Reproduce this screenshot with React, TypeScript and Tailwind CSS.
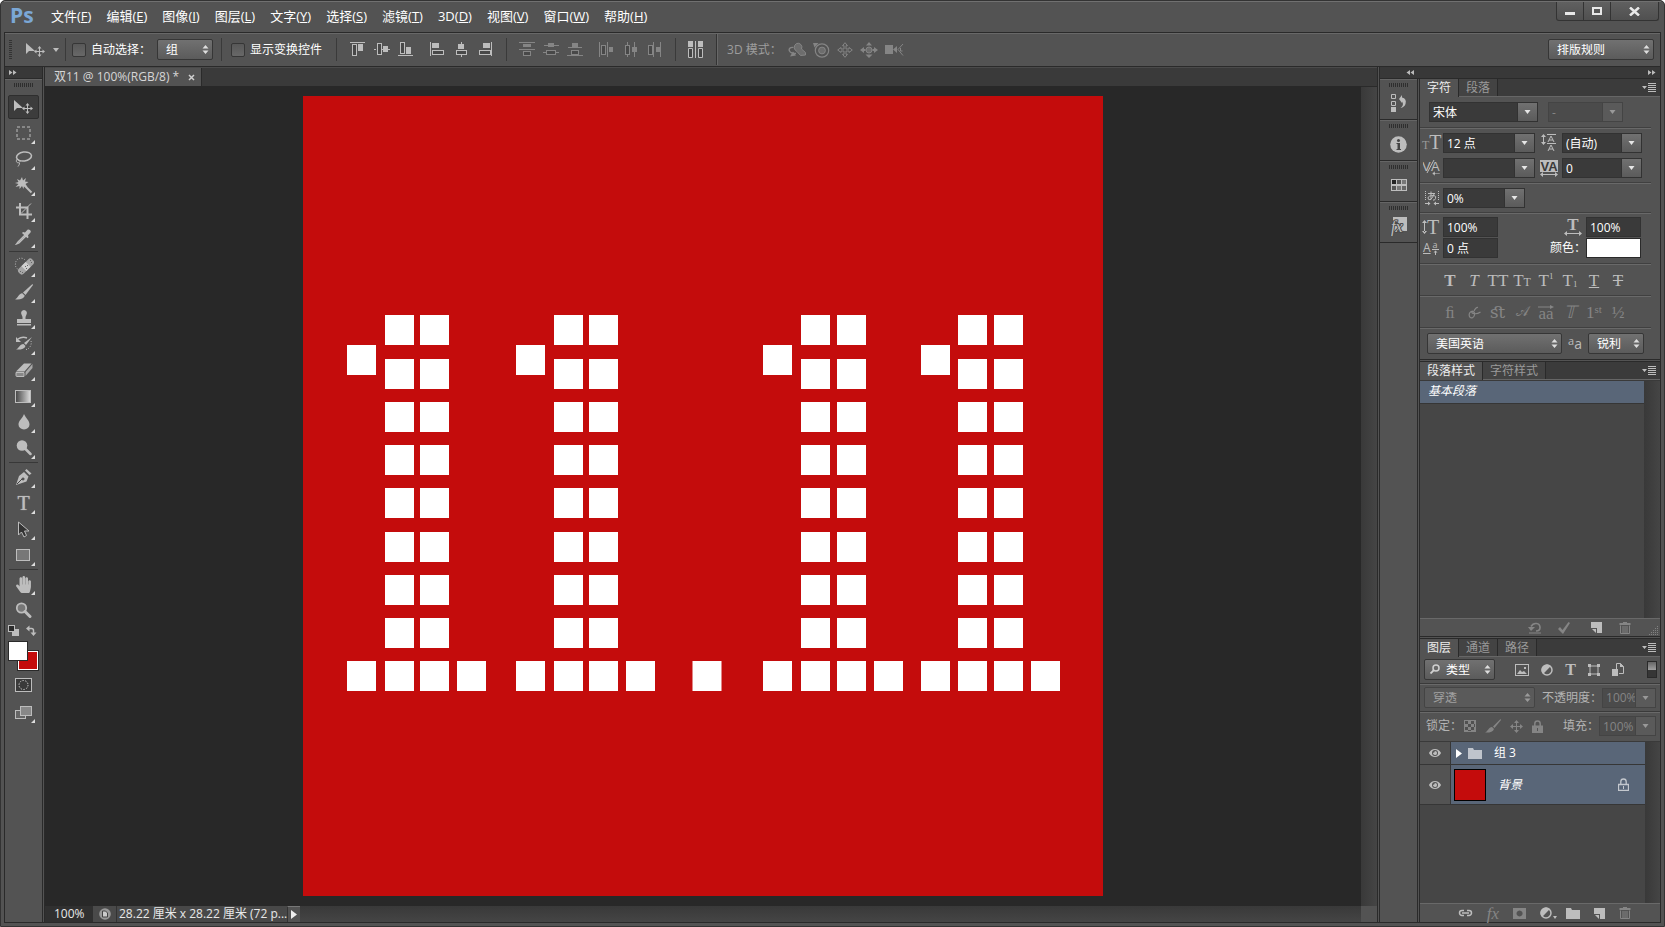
import { clsx } from "clsx"
import { Fragment, type ReactNode } from "react"
import { FaEye, FaHandPaper } from "react-icons/fa"

const MENUS = [
  ["文件", "F"],
  ["编辑", "E"],
  ["图像", "I"],
  ["图层", "L"],
  ["文字", "Y"],
  ["选择", "S"],
  ["滤镜", "T"],
  ["3D", "D"],
  ["视图", "V"],
  ["窗口", "W"],
  ["帮助", "H"],
]

function Svg({ w, h, children, className }: { w: number; h: number; children: ReactNode; className?: string }) {
  return (
    <svg width={w} height={h} viewBox={`0 0 ${w} ${h}`} fill="currentColor" aria-hidden="true" className={clsx("shrink-0", className)}>
      {children}
    </svg>
  )
}

/* ---------- shared controls ---------- */

function Select({ label, options, className, pad = "pl-2", disabled }: {
  label: string
  options: string[]
  className: string
  pad?: string
  disabled?: boolean
}) {
  return (
    <span className={clsx("relative inline-flex h-[21px] shrink-0", className)}>
      <select
        aria-label={label}
        disabled={disabled}
        className={clsx(
          "h-full w-full appearance-none rounded-[2px] border text-[12px] leading-none",
          pad,
          disabled
            ? "border-[#444] bg-[#5a5a5a] text-[#a0a0a0]"
            : "border-[#363636] bg-linear-to-b from-[#717171] to-[#5b5b5b] text-white",
        )}
      >
        {options.map((o) => <option key={o}>{o}</option>)}
      </select>
      <Svg w={7} h={9} className={clsx("pointer-events-none absolute top-[6px] right-1", disabled ? "text-[#9a9a9a]" : "text-[#dedede]")}>
        <path d="M3.5 0 6.5 3.5h-6zM3.5 9 .5 5.5h6z" />
      </Svg>
    </span>
  )
}

function Combo({ label, value, disabled, className }: { label: string; value: string; disabled?: boolean; className?: string }) {
  return (
    <span className={clsx("flex h-5 border", disabled ? "border-[#444]" : "border-[#323232]", className)}>
      <input
        aria-label={label}
        defaultValue={value}
        disabled={disabled}
        className={clsx("w-0 min-w-0 flex-1 pl-[3px] text-[12px] leading-none", disabled ? "bg-[#4b4b4b] text-[#858585]" : "bg-[#3a3a3a] text-white")}
      />
      <button
        type="button"
        aria-label={`${label} 选项`}
        disabled={disabled}
        className={clsx(
          "flex w-5 items-center justify-center border-l",
          disabled ? "border-[#444] bg-[#5a5a5a] text-[#999]" : "border-[#323232] bg-linear-to-b from-[#717171] to-[#5b5b5b] text-[#e6e6e6]",
        )}
      >
        <Svg w={7} h={4}><path d="M.5 0h6l-3 4z" /></Svg>
      </button>
    </span>
  )
}

function Field({ label, value }: { label: string; value: string }) {
  return (
    <input
      aria-label={label}
      defaultValue={value}
      className="h-5 w-full min-w-0 border border-[#323232] bg-[#3a3a3a] px-[3px] text-[12px] leading-none text-white"
    />
  )
}

function IconButton({ label, children, className, disabled }: { label: string; children: ReactNode; className?: string; disabled?: boolean }) {
  return (
    <button type="button" title={label} aria-label={label} disabled={disabled}
      className={clsx("flex shrink-0 items-center justify-center", disabled ? "text-[#858585]" : "text-[#bdbdbd]", className)}>
      {children}
    </button>
  )
}

function Grip() {
  return (
    <Svg w={20} h={4} className="text-[#2e2e2e]">
      {Array.from({ length: 10 }, (_, i) => <rect key={i} x={i * 2} y={0} width={1} height={4} />)}
    </Svg>
  )
}

function Rule() {
  return <hr className="mr-[9px] h-[2px] border-t border-b border-t-[#404040] border-b-[#696969]" />
}

function Separator() {
  return <span className="h-[23px] w-px shrink-0 bg-[#3a3a3a]" />
}

function PanelTabs({ tabs }: { tabs: string[] }) {
  return (
    <div className="flex h-[18px] shrink-0 border-b border-[#666] bg-[#3b3b3b]" role="tablist">
      {tabs.map((t, i) => (
        <button
          key={t}
          type="button"
          role="tab"
          aria-selected={i === 0}
          className={clsx(
            "border-r border-[#2a2a2a] px-[7px] text-[12px] leading-none",
            i === 0 ? "-mb-px bg-[#535353] text-[#ececec]" : "bg-[#434343] text-[#9a9a9a]",
          )}
        >
          {t}
        </button>
      ))}
      <IconButton label="面板菜单" className="mr-1 ml-auto">
        <Svg w={14} h={9}>
          <path d="M0 3h5L2.500 6zM6 0h8v1H6zM6 2h8v1H6zM6 4h8v1H6zM6 6h8v1H6zM6 8h8v1H6z" />
        </Svg>
      </IconButton>
    </div>
  )
}

/* ---------- shapes used in more than one place ---------- */

const MoveGlyph = () => (
  <Svg w={19} h={14}>
    <path d="M0 0v11l3-3h6z" />
    <path d="M13.500 4v9M9 8.500h9" stroke="currentColor" />
    <path d="M13.500 3l2 2.500h-4zM13.500 14l2-2.500h-4zM8 8.500l2.500-2v4zM19 8.500l-2.500-2v4z" />
  </Svg>
)

const BrushGlyph = () => (
  <Svg w={18} h={16}>
    <path d="M17.500 0 18 1 10.500 11 8 8.500z" />
    <path d="M7.300 9.200 9.800 11.700C9 14.500 5 16 0 15.300 3 14 3.500 9.500 7.300 9.200z" />
  </Svg>
)

const NewGlyph = () => (
  <Svg w={11} h={11}>
    <path d="M0 0h11v11H6V6H0z" />
    <path d="M1 7h4v4z" />
  </Svg>
)

const TrashGlyph = () => (
  <Svg w={12} h={12}>
    <path d="M4 0h4v1h3.500v2H.500V1H4z" />
    <path d="M1.500 3.500v8h9v-8M4 4v7M6 4v7M8 4v7" stroke="currentColor" fill="none" />
  </Svg>
)

const AdjustGlyph = () => (
  <Svg w={12} h={12}>
    <circle cx={6} cy={6} r={5} fill="#555" stroke="currentColor" strokeWidth={1.500} />
    <path d="M9.900 2.100A5.500 5.500 0 0 0 2.100 9.900z" />
  </Svg>
)

const LockGlyph = () => (
  <Svg w={11} h={13}>
    <path d="M2.800 6V3.700a2.700 2.700 0 0 1 5.400 0V6" fill="none" stroke="currentColor" strokeWidth={1.500} />
    <path fillRule="evenodd" d="M0 5.500h11V13H0zM5 8v3h1V8z" />
  </Svg>
)

const LockOutlineGlyph = () => (
  <Svg w={11} h={13}>
    <path d="M2.800 6V3.700a2.700 2.700 0 0 1 5.400 0V6M.500 6.500h10v6H.500z" fill="none" stroke="currentColor" strokeWidth={1.300} />
    <path d="M5 8h1v3H5z" />
  </Svg>
)

const FolderGlyph = () => (
  <Svg w={14} h={11}><path d="M0 0h5l1 2h8v9H0z" /></Svg>
)

/* ---------- tools ---------- */

// null is a divider between tool groups
const TOOLS: ({ name: string; icon: ReactNode; plain?: boolean } | null)[] = [
  { name: "移动工具", icon: <MoveGlyph />, plain: true },
  { name: "矩形选框工具", icon: <Svg w={16} h={14}><rect x={1} y={1} width={13} height={12} fill="none" stroke="currentColor" strokeDasharray="3 2" /></Svg> },
  {
    name: "套索工具",
    icon: (
      <Svg w={18} h={16}>
        <g fill="none" stroke="currentColor" strokeWidth={1.500}>
          <ellipse cx={9} cy={5.500} rx={7.500} ry={4.500} transform="rotate(-8 9 5.500)" />
          <path d="M2.500 8C0 10 2 12.500 4 11.500S5 9 3 9.500M4.500 12c0 2-1 2.500-1.500 3.500" strokeWidth={1} />
        </g>
      </Svg>
    ),
  },
  {
    name: "魔棒工具",
    icon: (
      <Svg w={18} h={17}>
        <path d="M7 0l1 3.500L11 1l-1 3.500 3.500.500-3 2 2 3-3.500-1L8.500 12 7 9l-2.500 3V9L.500 10l3-3L0 6l3.500-1L2 2l3 1.500z" />
        <path d="M9.500 8.500l7 7" stroke="currentColor" strokeWidth={2} />
      </Svg>
    ),
  },
  {
    name: "裁剪工具",
    icon: (
      <Svg w={16} h={16}>
        <path d="M4 0v11.500h12M0 4.500h11.500V16" fill="none" stroke="currentColor" strokeWidth={2} />
        <path d="M5 10.500L15 .500" stroke="currentColor" />
      </Svg>
    ),
  },
  {
    name: "吸管工具",
    icon: (
      <Svg w={17} h={16}>
        <path d="M10 6 3 13l-1.500 2L4 14l7-7" fill="#555" stroke="currentColor" strokeWidth={1.300} />
        <path d="M8 3l2 .500L12.500.800C14-.500 16.800 1.800 15.500 3.500L13 6.200l.500 2-1 1L7 4z" />
      </Svg>
    ),
  },
  null,
  {
    name: "污点修复画笔工具",
    icon: (
      <Svg w={20} h={18}>
        <path d="M3.500 12A5.500 5.500 0 0 1 1.500 6.500 5.500 5.500 0 0 1 11.500 3.500" fill="none" stroke="currentColor" strokeDasharray="1 1.500" />
        <g transform="rotate(-45 12 9.500)">
          <rect x={2.500} y={6} width={19} height={7} rx={3} fill="#a6a6a6" />
          <rect x={9} y={6} width={6} height={7} fill="#d0d0d0" />
        </g>
        <path d="M11 9h1v1h-1zM13 8h1v1h-1zM12 11h1v1h-1zM6 14h1v1H6zM8 15h1v1H8zM16 3h1v1h-1zM17 5h1v1h-1z" fill="#666" />
      </Svg>
    ),
  },
  { name: "画笔工具", icon: <BrushGlyph /> },
  {
    name: "仿制图章工具",
    icon: (
      <Svg w={16} h={16}>
        <path d="M8 0a3 3 0 0 1 2.500 4.500L9.500 7v2H15v4H1V9h5.500V7l-1-2.500A3 3 0 0 1 8 0z" />
        <path d="M1 14h14v1.500H1z" />
      </Svg>
    ),
  },
  {
    name: "历史记录画笔工具",
    icon: (
      <Svg w={18} h={16}>
        <path d="M17 1l-6 8-2-2zM8.500 8l2 2c-1 3-5 4-9.500 3.500C4 12.500 4.500 8 8.500 8z" />
        <path d="M3 3c3-2 6-2 9-1" fill="none" stroke="currentColor" strokeWidth={1.500} />
        <path d="M1 1v5h5z" />
        <path d="M16 5c1 3-1 8-5 8.500" fill="none" stroke="currentColor" strokeDasharray="1 1.500" />
      </Svg>
    ),
  },
  {
    name: "橡皮擦工具",
    icon: (
      <Svg w={18} h={14}>
        <path d="M9 .500h7.500L9.500 8.500H1z" />
        <path d="M1 9.500h8v4H2q-1 0-1-1z" fill="#888" stroke="currentColor" />
        <path d="M10.500 9l7-8v4l-7 8z" fill="#a8a8a8" />
      </Svg>
    ),
  },
  {
    name: "渐变工具",
    icon: (
      <Svg w={17} h={13}>
        <defs>
          <linearGradient id="toolFade"><stop stopColor="#444" /><stop offset="1" stopColor="#ddd" /></linearGradient>
        </defs>
        <rect x={.500} y={.500} width={15} height={12} fill="url(#toolFade)" stroke="currentColor" />
      </Svg>
    ),
  },
  { name: "模糊工具", icon: <Svg w={12} h={16}><path d="M6 0c2 4.500 5.500 6.500 5.500 10.500a5.500 5 0 0 1-11 0C.500 6.500 4.500 4.500 6 0z" /></Svg> },
  {
    name: "减淡工具",
    icon: (
      <Svg w={16} h={16}>
        <circle cx={6} cy={5.500} r={5.300} />
        <path d="M9.500 9l5 5" stroke="currentColor" strokeWidth={2.500} strokeLinecap="round" />
      </Svg>
    ),
  },
  null,
  {
    name: "钢笔工具",
    icon: (
      <Svg w={17} h={17}>
        <path d="M11.500 0l5 4.500-2 1.500-4.500-4.500z" />
        <path fillRule="evenodd" d="M9 3l4.500 4.500-2 5L1 16l3-9zM8 8.500a1.500 1.500 0 1 0 .1 0z" />
        <path d="M2 15l5-5" stroke="#444" />
      </Svg>
    ),
  },
  { name: "横排文字工具", icon: <span className="font-[Liberation_Serif,serif] text-[20px] leading-none [text-shadow:0_0_1px_currentColor]">T</span> },
  { name: "路径选择工具", icon: <Svg w={13} h={17}><path d="M1.500 1v13l3-3 2.500 5 2.500-1.500L7.500 10H12z" fill="#333" stroke="currentColor" /></Svg> },
  { name: "矩形工具", icon: <Svg w={15} h={13}><rect x={.500} y={.500} width={13} height={11} fill="#777" stroke="currentColor" /></Svg> },
  null,
  { name: "抓手工具", icon: <FaHandPaper size={17} /> },
  {
    name: "缩放工具",
    plain: true,
    icon: (
      <Svg w={17} h={17}>
        <circle cx={6.500} cy={6} r={4.700} fill="#777" stroke="currentColor" strokeWidth={1.800} />
        <path d="M10 9.500l5 5" stroke="currentColor" strokeWidth={3} strokeLinecap="round" />
      </Svg>
    ),
  },
]

function Corner() {
  return <Svg w={4} h={4} className="absolute right-[4px] bottom-[1px] text-[#ddd]"><path d="M4 0v4H0z" /></Svg>
}

function Toolbar() {
  return (
    <aside className="flex w-[38px] shrink-0 flex-col border-r border-[#2a2a2a]">
      <div className="flex h-3 items-center border-b border-[#2a2a2a] bg-[#383838] pl-1 text-[#bbb]">
        <Svg w={8} h={5}><path d="M0 0l3.500 2.500L0 5zM4 0l3.500 2.500L4 5z" /></Svg>
      </div>
      <div className="flex flex-col items-center border-t border-[#656565] pt-[3px]">
        <Grip />
        <div className="mt-2 flex flex-col items-center gap-[2px]">
          {TOOLS.map((t, i) =>
            t ? (
              <IconButton key={t.name} label={t.name}
                className={clsx("relative h-6 w-[31px]", i === 0 && "rounded-[2px] border border-[#2e2e2e] bg-[#3c3c3c]")}>
                {t.icon}
                {t.plain ? null : <Corner />}
              </IconButton>
            ) : (
              <span key={i} className="h-px w-[29px] bg-[#383838]" />
            ),
          )}
        </div>
        <div className="mt-[3px] flex w-[31px] justify-between pr-[2px]">
          <IconButton label="默认前景色和背景色">
            <Svg w={11} h={11}>
              <path d="M4 4h7v7H4z" />
              <rect x={.500} y={.500} width={6} height={6} fill="#2b2b2b" stroke="currentColor" />
            </Svg>
          </IconButton>
          <IconButton label="切换前景色和背景色">
            <Svg w={11} h={11}>
              <path d="M2 3.500h3.500q2 0 2 2V8" fill="none" stroke="currentColor" strokeWidth={1.500} />
              <path d="M0 3.500L3.500.500v6zM7.500 11l-3-3.500h6z" />
            </Svg>
          </IconButton>
        </div>
        <div className="mt-[5px] grid w-[31px] grid-cols-[10px_10px_10px] grid-rows-[10px_10px_9px]">
          <button type="button" aria-label="前景色" className="z-10 col-span-2 col-start-1 row-span-2 row-start-1 border border-[#2a2a2a] bg-white" />
          <button type="button" aria-label="背景色" className="col-span-2 col-start-2 row-span-2 row-start-2 border border-white bg-[#c40c0c] outline outline-[#2a2a2a]" />
        </div>
        <IconButton label="以快速蒙版模式编辑" className="mt-[3px] h-6 w-[31px]">
          <Svg w={17} h={14}>
            <rect x={.500} y={.500} width={16} height={13} fill="#3a3a3a" stroke="currentColor" />
            <circle cx={8.500} cy={7} r={4.500} fill="none" stroke="#d0d0d0" strokeDasharray="1.400 1.400" />
          </Svg>
        </IconButton>
        <IconButton label="更改屏幕模式" className="relative mt-[3px] h-6 w-[31px]">
          <Svg w={17} h={13}>
            <rect x={.500} y={4.500} width={10} height={8} fill="#666" stroke="currentColor" />
            <rect x={5.500} y={.500} width={11} height={9} fill="#888" stroke="currentColor" />
          </Svg>
          <Corner />
        </IconButton>
      </div>
    </aside>
  )
}

/* ---------- options bar ---------- */

// bars: [x, y, w, h, filled]
type Bar = [number, number, number, number, boolean]
type Line = [number, number, number, number]

const ALIGN: { name: string; bars: Bar[]; lines: Line[] }[] = [
  { name: "顶对齐", bars: [[2, 2, 4, 11, false], [8, 2, 5, 7, true]], lines: [[0, 0, 15, 1]] },
  { name: "垂直居中对齐", bars: [[3, 1, 4, 11, false], [9, 4, 5, 6, true]], lines: [[0, 7, 2, 1], [7, 7, 2, 1], [14, 7, 2, 1]] },
  { name: "底对齐", bars: [[2, 0, 4, 11, false], [8, 5, 5, 7, true]], lines: [[0, 13, 15, 1]] },
  { name: "左对齐", bars: [[2, 1, 7, 5, true], [2, 8, 11, 4, false]], lines: [[0, 0, 1, 14]] },
  { name: "水平居中对齐", bars: [[4, 2, 6, 5, true], [2, 8, 10, 4, false]], lines: [[7, 0, 1, 2], [7, 12, 1, 3]] },
  { name: "右对齐", bars: [[5, 1, 7, 5, true], [1, 8, 11, 4, false]], lines: [[13, 0, 1, 14]] },
]

const DISTRIBUTE: { name: string; bars: Bar[]; lines: Line[] }[] = [
  { name: "按顶分布", bars: [[4, 2, 8, 3, true], [4, 9, 7, 4, false]], lines: [[0, 0, 16, 1], [0, 7, 16, 1]] },
  { name: "垂直居中分布", bars: [[5, 1, 6, 4, true], [3, 8, 9, 4, false]], lines: [[1, 3, 15, 1], [0, 10, 3, 1], [13, 10, 3, 1]] },
  { name: "按底分布", bars: [[5, 1, 6, 4, true], [4, 8, 7, 4, false]], lines: [[1, 5, 14, 1], [0, 13, 16, 1]] },
  { name: "按左分布", bars: [[2, 3, 4, 9, false], [10, 5, 4, 5, true]], lines: [[0, 0, 1, 15], [8, 0, 1, 15]] },
  { name: "水平居中分布", bars: [[2, 3, 4, 9, false], [9, 5, 5, 5, true]], lines: [[4, 0, 1, 3], [4, 12, 1, 3], [11, 0, 1, 15]] },
  { name: "按右分布", bars: [[1, 3, 4, 9, false], [9, 5, 4, 5, true]], lines: [[6, 0, 1, 15], [13, 0, 1, 15]] },
]

function AlignGlyph({ bars, lines }: { bars: Bar[]; lines: Line[] }) {
  return (
    <Svg w={16} h={15}>
      {lines.map(([x, y, w, h], i) => <rect key={i} x={x} y={y} width={w} height={h} />)}
      {bars.map(([x, y, w, h, filled], i) =>
        filled
          ? <rect key={i} x={x} y={y} width={w} height={h} />
          : <rect key={i} x={x + .5} y={y + .5} width={w} height={h} fill="#484848" stroke="currentColor" />,
      )}
    </Svg>
  )
}

const MODES_3D: { name: string; icon: ReactNode }[] = [
  {
    name: "旋转 3D 对象",
    icon: (
      <Svg w={18} h={15}>
        <path d="M8.500 1.500a4 4 0 0 1 5 5.500l4 3.500v2.500l-5 .500-3.500-4a4.500 4.500 0 0 1-.500-8z" fill="#6d6d6d" stroke="currentColor" />
        <path d="M5.500 5.500C2 5 .500 7 1.500 9S5 11.500 8 11.500" fill="none" stroke="currentColor" strokeWidth={1.400} />
        <path d="M2 14.500l3-5 3 4z" />
      </Svg>
    ),
  },
  {
    name: "滚动 3D 对象",
    icon: (
      <Svg w={17} h={16}>
        <circle cx={9} cy={8.500} r={6.700} fill="none" stroke="currentColor" strokeWidth={1.200} />
        <circle cx={9} cy={8.500} r={3.400} fill="#6d6d6d" stroke="currentColor" />
        <path d="M0 1h5.500L1.500 5.500z" />
      </Svg>
    ),
  },
  {
    name: "拖动 3D 对象",
    icon: (
      <Svg w={16} h={16}>
        <path d="M8 .700l2.500 3H9v3.300h3V5.500L15.300 8 12 10.500V9H9v3.300h1.500l-2.500 3-2.500-3H7V9H4v1.500L.700 8 4 5.500V7h3V3.700H5.500z" fill="none" stroke="currentColor" />
      </Svg>
    ),
  },
  {
    name: "滑动 3D 对象",
    icon: (
      <Svg w={18} h={16}>
        <circle cx={9} cy={8} r={3} fill="#6d6d6d" stroke="currentColor" />
        <path d="M9 0l3 3.500H6zM9 16l3.500-3.500h-7zM0 8l4-3v2h1.500v2H4v2zM18 8l-4-3v2h-1.500v2H14v2z" />
      </Svg>
    ),
  },
  {
    name: "缩放 3D 对象",
    icon: (
      <Svg w={19} h={12}>
        <path d="M0 1h8v9H0zM8 5.500l4-3.500v7z" />
        <path d="M18 0l-5 5.500 5 6M15.500 4v3h2" fill="none" stroke="currentColor" />
      </Svg>
    ),
  },
]

function Check({ id, label }: { id: string; label: string }) {
  return (
    <div className="flex shrink-0 items-center gap-[5px]">
      <input id={id} type="checkbox" className="size-[14px] appearance-none rounded-[2px] border border-[#363636] bg-linear-to-b from-[#585858] to-[#686868] checked:bg-[#999]" />
      <label htmlFor={id} className="text-[12px] whitespace-nowrap">{label}</label>
    </div>
  )
}

function OptionsBar() {
  return (
    <div className="flex h-[34px] shrink-0 items-center overflow-hidden border-t border-b border-t-[#686868] border-b-[#2a2a2a] pb-px pl-1">
      <Svg w={3} h={20} className="text-[#333]">
        {Array.from({ length: 10 }, (_, i) => <rect key={i} x={0} y={i * 2} width={3} height={1} />)}
      </Svg>
      <IconButton label="移动工具预设" className="mr-[6px] ml-[14px] gap-2">
        <MoveGlyph />
        <Svg w={6} h={4}><path d="M0 0h6L3 4z" /></Svg>
      </IconButton>
      <Separator />
      <div className="mr-2 ml-[6px] flex items-center gap-[6px]">
        <Check id="auto-select" label="自动选择：" />
        <Select label="自动选择" options={["组", "图层"]} className="w-14" />
      </div>
      <Separator />
      <div className="mr-[14px] ml-[9px]"><Check id="show-transform" label="显示变换控件" /></div>
      <Separator />
      <div className="mr-3 ml-[13px] flex gap-2">
        {ALIGN.map((a, i) => (
          <IconButton key={a.name} label={a.name} className={clsx(i === 3 && "ml-2")}><AlignGlyph {...a} /></IconButton>
        ))}
      </div>
      <Separator />
      <div className="mr-3 ml-3 flex gap-2">
        {DISTRIBUTE.map((a, i) => (
          <IconButton key={a.name} label={a.name} disabled className={clsx(i === 3 && "ml-2")}><AlignGlyph {...a} /></IconButton>
        ))}
      </div>
      <Separator />
      <IconButton label="自动对齐图层" className="mr-3 ml-3">
        <Svg w={16} h={17}>
          <path d="M0 0h5v6H0zM10 0h5v6h-5zM7 0h1v17H7z" />
          <path d="M.500 7.500h4v9h-4zM10.500 7.500h4v9h-4z" fill="#444" stroke="currentColor" />
        </Svg>
      </IconButton>
      <span className="h-full w-[2px] shrink-0 border-r border-l border-l-[#333] border-r-[#686868]" />
      <span className="ml-[9px] shrink-0 text-[12px] text-[#9d9d9d]">3D 模式：</span>
      <div className="ml-[6px] flex gap-[7px]">
        {MODES_3D.map((m) => <IconButton key={m.name} label={m.name} disabled>{m.icon}</IconButton>)}
      </div>
      <Select label="工作区" options={["排版规则", "基本功能"]} className="mr-[6px] ml-auto w-[106px]" />
    </div>
  )
}

/* ---------- document ---------- */

const ROWS = [315, 359, 402, 445, 488, 532, 575, 618, 661]
// left flag, two stem columns, right foot
const DIGITS = [
  [347, 385, 420, 457],
  [516, 554, 589, 626],
  [763, 801, 837, 874],
  [921, 958, 994, 1031],
]

function Artwork() {
  return (
    <svg width={800} height={800} viewBox="303 96 800 800" className="shrink-0" role="img" aria-label="11.11">
      <rect x={303} y={96} width={800} height={800} fill="#c40c0c" />
      <g fill="#fff">
        {DIGITS.map(([flag, a, b, foot]) => (
          <Fragment key={flag}>
            <rect x={flag} y={345} width={29} height={30} />
            {ROWS.map((y) => (
              <Fragment key={y}>
                <rect x={a} y={y} width={29} height={30} />
                <rect x={b} y={y} width={29} height={30} />
              </Fragment>
            ))}
            <rect x={flag} y={661} width={29} height={30} />
            <rect x={foot} y={661} width={29} height={30} />
          </Fragment>
        ))}
        <rect x={692.500} y={661} width={29} height={30} />
      </g>
    </svg>
  )
}

function DocumentArea() {
  return (
    <main className="ml-px flex min-w-0 flex-1 flex-col border-r border-l border-[#2a2a2a]">
      <div className="flex h-[19px] shrink-0 border-t border-[#4a4a4a] bg-[#3a3a3a]">
        <div className="flex items-center gap-[9px] border-r border-[#2a2a2a] bg-[#535353] pr-[6px] pl-[9px] text-[12px] leading-none text-[#d6d6d6]">
          <span className="whitespace-pre">双11 @ 100%(RGB/8) *</span>
          <IconButton label="关闭文档">
            <Svg w={7} h={7}><path d="M1 1l5 5M6 1L1 6" stroke="#d0d0d0" strokeWidth={1.500} /></Svg>
          </IconButton>
        </div>
      </div>
      <div className="flex min-h-0 flex-1">
        <div className="flex min-w-0 flex-1 items-center justify-center overflow-hidden bg-[#282828]">
          <Artwork />
        </div>
        <div className="w-4 shrink-0 border-t border-[#2a2a2a] bg-linear-to-r from-[#393939] to-[#454545]" />
      </div>
      <div className="flex h-4 shrink-0 bg-[#535353] text-[12px] leading-4 text-[#e8e8e8]">
        <input aria-label="缩放比例" defaultValue="100%" className="w-12 bg-[#303030] pl-[9px]" />
        <IconButton label="版本信息" className="w-[23px] bg-[#4a4a4a]">
          <Svg w={12} h={12}>
            <circle cx={6} cy={6} r={5.800} fill="#999" />
            <path d="M3.500 3h3l2 2v4h-5z" fill="#ccc" stroke="#444" />
          </Svg>
        </IconButton>
        <span className="w-[171px] overflow-hidden border-l border-[#333] bg-[#484848] pl-[2px] whitespace-nowrap">28.22 厘米 x 28.22 厘米 (72 p...</span>
        <IconButton label="状态栏选项" className="w-[13px] border-t border-l border-t-[#777] border-l-[#333]">
          <Svg w={6} h={9} className="text-[#eee]"><path d="M0 0l6 4.500L0 9z" /></Svg>
        </IconButton>
        <div className="mr-4 flex-1 bg-linear-to-b from-[#393939] to-[#454545]" />
      </div>
    </main>
  )
}

/* ---------- right side ---------- */

const serifIcon = "font-[Liberation_Serif,DejaVu_Serif,serif]"

const DOCK: { name: string; icon: ReactNode }[] = [
  {
    name: "历史记录",
    icon: (
      <Svg w={16} h={18}>
        <path d="M.500.500h4v4h-4zM.500 7.500h4v4h-4z" fill="none" stroke="currentColor" />
        <path d="M0 13h5v5H0zM8 5l3-4v2.500q5 1 3.500 6.500-1 3-5 4 4-3 1.500-6.500V9z" />
      </Svg>
    ),
  },
  {
    name: "信息",
    icon: (
      <Svg w={17} h={17}>
        <circle cx={8.500} cy={8.500} r={8.300} />
        <path d="M6.500 7H10v6h1v1H6.500v-1H7.500V8h-1z" fill="#444" />
        <circle cx={8.500} cy={4.500} r={1.500} fill="#444" />
      </Svg>
    ),
  },
  {
    name: "色板",
    icon: (
      <Svg w={16} h={12}>
        <rect width={16} height={12} />
        <path d="M1 1h4v4H1z" fill="#222" />
        <path d="M6 1h4v4H6zM1 7h4v4H1z" fill="#555" />
        <path d="M11 1h4v4h-4zM6 7h4v4H6z" fill="#777" />
        <path d="M11 7h4v4h-4z" fill="#666" />
      </Svg>
    ),
  },
  {
    name: "样式",
    icon: (
      <Svg w={17} h={19} className={serifIcon}>
        <path d="M3 0h14v14H3z" />
        <text x={1} y={15} fontSize={16} fontStyle="italic" stroke="#4b4b4b" strokeWidth={2} paintOrder="stroke">fx</text>
      </Svg>
    ),
  },
]

const TYPE_STYLES: { name: string; glyph: ReactNode }[] = [
  { name: "仿粗体", glyph: <b>T</b> },
  { name: "仿斜体", glyph: <i>T</i> },
  { name: "全部大写字母", glyph: <span>TT</span> },
  { name: "小型大写字母", glyph: <span>T<small className="text-[12px]">T</small></span> },
  { name: "上标", glyph: <span className="flex">T<small className="text-[9px] leading-none">1</small></span> },
  { name: "下标", glyph: <span className="flex items-end">T<small className="text-[9px] leading-none">1</small></span> },
  { name: "下划线", glyph: <u>T</u> },
  { name: "删除线", glyph: <s>T</s> },
]

const OPEN_TYPE: { name: string; glyph: ReactNode }[] = [
  { name: "标准连字", glyph: "ﬁ" },
  {
    name: "上下文替代字",
    glyph: (
      <Svg w={13} h={13}>
        <path d="M5 5C2 5 .500 8 1.500 10.500S6 12 6.500 9 5 4.500 4 6s4 3 8.500 0M6 5q2-4 4-3.500" fill="none" stroke="currentColor" strokeWidth={1.200} />
      </Svg>
    ),
  },
  { name: "自由连字", glyph: "ﬆ" },
  { name: "花饰字", glyph: <span className="text-[14px]">&#x1D49C;</span> },
  {
    name: "文体替代字",
    glyph: (
      <span className="flex flex-col items-center leading-[10px]">
        <Svg w={16} h={4}><path d="M0 1.500h12V0l4 2-4 2V2.500H0z" /></Svg>
        <span>aa</span>
      </span>
    ),
  },
  { name: "标题替代字", glyph: <i>&#x1D54B;</i> },
  { name: "序数字", glyph: <span className="flex">1<small className="text-[11px] leading-none">st</small></span> },
  { name: "分数字", glyph: "½" },
]

function CharacterPanel() {
  return (
    <section className="shrink-0 border-b border-[#2a2a2a]">
      <PanelTabs tabs={["字符", "段落"]} />
      <div className="flex h-[30px] items-center gap-[10px] pl-[9px]">
        <Combo label="字体" value="宋体" className="w-[109px]" />
        <Combo label="字体样式" value="-" disabled className="w-[75px]" />
      </div>
      <Rule />
      <div className="grid h-[53px] grid-cols-[23px_92px_27px_80px] grid-rows-[20px_20px] content-start items-center gap-y-[5px] pt-1 text-[#bdbdbd]">
        <span className={clsx(serifIcon, "flex items-baseline pl-[2px] text-[20px] leading-5")}>
          <small className="text-[12px] text-[#999]">T</small>T
        </span>
        <Combo label="字体大小" value="12 点" />
        <span className="flex justify-center">
          <Svg w={16} h={18}>
            <path d="M6 .500h9M6 9.500h9M2.500 2v7" stroke="currentColor" />
            <path d="M2.500 0L5 3H0zM2.500 11L5 8H0z" />
            <path d="M7 8l3-6 3 6M8 6h4M7 17l3-6 3 6M8 15h4" fill="none" stroke="currentColor" />
          </Svg>
        </span>
        <Combo label="行距" value="(自动)" />
        <span className="flex justify-center">
          <Svg w={18} h={16} className="font-[Liberation_Sans,sans-serif]">
            <text x={-1} y={11} fontSize={13}>V</text>
            <text x={8} y={11} fontSize={13}>A</text>
            <path d="M4 13L11 0" stroke="currentColor" />
            <path d="M9 13.500l3-2.500v2h5v1h-5v2z" stroke="#535353" strokeWidth={.500} />
          </Svg>
        </span>
        <Combo label="字距微调" value="" />
        <span className="flex justify-center">
          <Svg w={18} h={17} className="font-[Liberation_Sans,sans-serif]">
            <path d="M0 0h18v12H0z" />
            <text x={9} y={11} fontSize={13} fontWeight="bold" textAnchor="middle" fill="#3a3a3a">VA</text>
            <path d="M0 14.500l3-2.500v2h12v-2l3 2.500-3 2.500v-2H3v2z" />
          </Svg>
        </span>
        <Combo label="字距调整" value="0" />
      </div>
      <Rule />
      <div className="grid h-7 grid-cols-[23px_82px] items-center text-[#bdbdbd]">
        <span className="flex justify-center">
          <Svg w={14} h={15}>
            <path d="M.500 0v10M13.500 0v10" stroke="currentColor" strokeDasharray="1 1" />
            <path d="M3 2.500h7M6 .500v8q-3 1-3-1.500T9 4.500q2.500.500 1.500 3T8 9M9 3Q8 7 5 9" fill="none" stroke="currentColor" />
            <path d="M0 12h3v-1.500L5.500 12.500 3 14.500V13H0zM14 12h-3v-1.500l-2.500 2 2.500 2V13h3z" />
          </Svg>
        </span>
        <Combo label="比例间距" value="0%" />
      </div>
      <Rule />
      <div className="mr-[19px] grid h-[49px] grid-cols-[23px_55px_1fr_55px] grid-rows-[20px_20px] content-start items-center gap-y-[1px] pt-[3px] text-[#bdbdbd]">
        <span className={clsx(serifIcon, "flex items-center pl-[2px] text-[20px] leading-5")}>
          <Svg w={5} h={14}><path d="M2 2h1v10H2zM2.500 0L5 3H0zM2.500 14L5 11H0z" /></Svg>T
        </span>
        <Field label="垂直缩放" value="100%" />
        <span className={clsx(serifIcon, "flex flex-col items-center justify-self-end pr-1 text-[17px] leading-[13px] font-bold")}>
          T
          <Svg w={18} h={5}><path d="M0 2.500L3 0v2h12V0l3 2.500L15 5V3H3v2z" /></Svg>
        </span>
        <Field label="水平缩放" value="100%" />
        <span className="flex gap-[1px] pl-[3px] text-[12px] leading-[14px]">
          <u>A</u>
          <span className="flex flex-col items-center text-[9px] leading-[8px]">
            a
            <Svg w={7} h={6}><path d="M0 0h7v1H0zM3 3h1v3H3zM3.500 1.500l2 2h-4z" /></Svg>
          </span>
        </span>
        <Field label="基线偏移" value="0 点" />
        <span className="justify-self-end text-[12px] text-white">颜色：</span>
        <button type="button" aria-label="颜色" className="h-5 border border-[#2a2a2a] bg-white" />
      </div>
      <Rule />
      <div className="flex h-[30px] items-center pl-[18px]">
        {TYPE_STYLES.map((t) => (
          <IconButton key={t.name} label={t.name} className={clsx(serifIcon, "w-6 text-[17px] leading-none")}>{t.glyph}</IconButton>
        ))}
      </div>
      <Rule />
      <div className="flex h-[30px] items-center pl-[18px]">
        {OPEN_TYPE.map((t) => (
          <IconButton key={t.name} label={t.name} disabled className={clsx(serifIcon, "w-6 text-[17px] leading-none")}>{t.glyph}</IconButton>
        ))}
      </div>
      <Rule />
      <div className="flex h-[30px] items-center pb-px pl-[7px]">
        <Select label="语言" options={["美国英语"]} className="w-[135px]" />
        <span className="flex w-[26px] items-center justify-center text-[14px] text-[#bdbdbd]"><small className="-mt-1 text-[11px]">a</small>a</span>
        <Select label="消除锯齿" options={["锐利", "犀利", "浑厚", "平滑"]} className="w-14" />
      </div>
    </section>
  )
}

function StylesPanel() {
  return (
    <section className="mt-px shrink-0 border-t border-b border-[#2a2a2a]">
      <PanelTabs tabs={["段落样式", "字符样式"]} />
      <div className="flex h-[238px] border-t border-[#3a3a3a] bg-[#464646]">
        <ul className="flex-1">
          <li className="h-[23px] border-b border-[#363636] bg-[#596678] pl-2 text-[12px] leading-5 text-white italic">基本段落</li>
        </ul>
        <div className="w-4 bg-linear-to-r from-[#393939] to-[#454545]" />
      </div>
      <div className="flex h-[18px] items-center border-t border-[#696969]">
        <div className="mr-[18px] ml-auto flex items-center gap-[17px]">
          <IconButton label="清除覆盖" disabled>
            <Svg w={13} h={12}>
              <path d="M3 4.500Q5 1 8.500 1.500t3.500 4T8 9" fill="none" stroke="currentColor" strokeWidth={1.600} />
              <path d="M0 5h7L3 9zM1 10.500h12v1H1z" />
            </Svg>
          </IconButton>
          <IconButton label="重新定义" disabled><Svg w={12} h={12}><path d="M0 7l2-2 2.500 3L10.500 0 12 1 5 12z" /></Svg></IconButton>
          <IconButton label="创建新样式" className="ml-1"><NewGlyph /></IconButton>
          <IconButton label="删除样式" disabled><TrashGlyph /></IconButton>
        </div>
        <Svg w={10} h={10} className="mr-px self-end text-[#828282]">
          {[0, 1, 2, 3, 4].flatMap((r) => Array.from({ length: r + 1 }, (_, c) => (
            <rect key={`${r}-${c}`} x={8 - c * 2} y={r * 2} width={1} height={1} />
          )))}
        </Svg>
      </div>
    </section>
  )
}

function LayersPanel() {
  return (
    <section className="mt-px flex min-h-0 flex-1 flex-col border-t border-[#2a2a2a]">
      <PanelTabs tabs={["图层", "通道", "路径"]} />
      <div className="flex h-[27px] shrink-0 items-center border-b border-[#3a3a3a] pr-[3px] pb-px pl-1">
        <span className="relative flex">
          <Select label="图层筛选" options={["类型", "名称", "效果"]} pad="pl-[21px]" className="w-[71px]" />
          <Svg w={10} h={10} className="pointer-events-none absolute top-[5px] left-[6px] text-[#d0d0d0]">
            <circle cx={6} cy={4} r={3} fill="none" stroke="currentColor" strokeWidth={1.500} />
            <path d="M4 6L.500 9.500" stroke="currentColor" strokeWidth={1.800} />
          </Svg>
        </span>
        <div className="ml-5 flex items-center gap-3">
          <IconButton label="像素图层滤镜">
            <Svg w={14} h={12}>
              <path fillRule="evenodd" d="M0 0h14v12H0zM1 1v10h12V1z" />
              <path d="M2 10l3-4 2 2 2-1 3 3zM9 3h2v2H9z" />
            </Svg>
          </IconButton>
          <IconButton label="调整图层滤镜"><AdjustGlyph /></IconButton>
          <IconButton label="文字图层滤镜" className={clsx(serifIcon, "w-[11px] text-[16px] leading-none font-bold")}>T</IconButton>
          <IconButton label="形状图层滤镜">
            <Svg w={12} h={12}>
              <path d="M2 2h8v8H2z" fill="none" stroke="currentColor" />
              <path d="M0 0h3v3H0zM9 0h3v3H9zM0 9h3v3H0zM9 9h3v3H9z" />
            </Svg>
          </IconButton>
          <IconButton label="智能对象滤镜">
            <Svg w={12} h={13}>
              <path d="M4.500 6V.500h4l3 3v7H7" fill="none" stroke="currentColor" />
              <path d="M8 0v4h4zM0 6h6v7H0z" />
            </Svg>
          </IconButton>
        </div>
        <button type="button" role="switch" aria-checked="true" aria-label="打开或关闭图层滤镜"
          className="ml-auto flex h-[17px] w-[10px] flex-col border border-[#2a2a2a] bg-[#363636]">
          <span className="h-2 w-full bg-linear-to-b from-[#666] to-[#a0a0a0]" />
        </button>
      </div>
      <div className="flex h-7 shrink-0 items-center border-t border-b border-t-[#696969] border-b-[#3a3a3a] pr-1 pb-px pl-1 text-[12px] text-[#b4b4b4]">
        <Select label="混合模式" options={["穿透", "正常"]} disabled className="w-[111px]" />
        <span className="mr-auto ml-[7px] whitespace-nowrap">不透明度：</span>
        <Combo label="不透明度" value="100%" disabled className="w-[57px]" />
      </div>
      <div className="flex h-[30px] shrink-0 items-center border-t border-b border-t-[#696969] border-b-[#3a3a3a] pr-1 pb-[2px] pl-[6px] text-[12px] text-[#b4b4b4]">
        <span className="whitespace-nowrap">锁定：</span>
        <div className="ml-[2px] flex items-center gap-[9px]">
          <IconButton label="锁定透明像素" disabled>
            <Svg w={12} h={12}>
              <rect width={12} height={12} />
              <path d="M1 1h3v3H1zM7 1h3v3H7zM4 4h3v3H4zM1 7h3v3H1zM7 7h3v3H7zM10 4h1v3h-1zM4 10h3v1H4z" fill="#505050" />
            </Svg>
          </IconButton>
          <IconButton label="锁定图像像素" disabled><Svg w={16} h={14}><path d="M15.500 0L16 1 9.500 9 8 7.500zM7 8l2 2c-1 3-5 4-9 3.500C3 12.500 3.500 8 7 8z" /></Svg></IconButton>
          <IconButton label="锁定位置" disabled>
            <Svg w={13} h={13}><path d="M6.500 0L9 3H7v3h3V4l3 2.500L10 9V7H7v3h2l-2.500 3L4 10h2V7H3v2L0 6.500 3 4v2h3V3H4z" /></Svg>
          </IconButton>
          <IconButton label="锁定全部" disabled><LockGlyph /></IconButton>
        </div>
        <span className="ml-auto whitespace-nowrap">填充：</span>
        <Combo label="填充" value="100%" disabled className="w-[57px]" />
      </div>
      <div className="flex min-h-0 flex-1 bg-[#464646]">
        <ul className="flex-1 text-[12px] text-white">
          <li className="flex h-[23px] border-b border-[#363636]">
            <IconButton label="指示图层可见性" className="w-[31px] border-r border-[#363636] bg-[#535353]"><FaEye size={12} /></IconButton>
            <div className="flex flex-1 items-center bg-[#596678] pl-[5px]">
              <Svg w={6} h={9}><path d="M0 0l6 4.500L0 9z" /></Svg>
              <span className="mr-3 ml-[6px] text-[#bfc4cc]"><FolderGlyph /></span>
              组 3
            </div>
          </li>
          <li className="flex h-10 border-b border-[#363636]">
            <IconButton label="指示图层可见性" className="w-[31px] border-r border-[#363636] bg-[#535353]"><FaEye size={12} /></IconButton>
            <div className="flex flex-1 items-center bg-[#596678] pr-4 pl-[3px]">
              <span className="mr-3 size-8 border border-black bg-[#c40c0c]" />
              <span className="italic">背景</span>
              <span className="ml-auto text-[#c4c8ce]"><LockOutlineGlyph /></span>
            </div>
          </li>
        </ul>
        <div className="w-[15px] bg-linear-to-r from-[#393939] to-[#454545]" />
      </div>
      <div className="flex h-[19px] shrink-0 items-center justify-end gap-[14px] border-t border-[#696969] pr-[29px]">
        <IconButton label="链接图层">
          <Svg w={15} h={8}>
            <path d="M6 1.500H4a2.500 2.500 0 0 0 0 5h2M9 1.500h2a2.500 2.500 0 0 1 0 5H9M4 4h7" fill="none" stroke="currentColor" strokeWidth={1.500} />
          </Svg>
        </IconButton>
        <IconButton label="添加图层样式" disabled className={clsx(serifIcon, "text-[17px] leading-none italic")}>fx</IconButton>
        <IconButton label="添加图层蒙版" disabled><Svg w={13} h={11}><path fillRule="evenodd" d="M0 0h13v11H0zM6.500 2.500a3 3 0 1 0 .1 0z" /></Svg></IconButton>
        <IconButton label="创建新的填充或调整图层" className="relative">
          <AdjustGlyph />
          <Svg w={4} h={3} className="absolute -right-[5px] bottom-0"><path d="M0 0h4L2 3z" /></Svg>
        </IconButton>
        <IconButton label="创建新组"><FolderGlyph /></IconButton>
        <IconButton label="创建新图层"><NewGlyph /></IconButton>
        <IconButton label="删除图层" disabled><TrashGlyph /></IconButton>
      </div>
    </section>
  )
}

function RightSide() {
  return (
    <aside className="ml-px flex w-[281px] shrink-0 flex-col border-l border-[#2a2a2a]">
      <div className="flex h-3 shrink-0 items-center justify-between border-b border-[#2a2a2a] bg-[#383838] pr-1 pl-[26px] text-[#bbb]">
        <Svg w={8} h={5}><path d="M4 0L.500 2.500 4 5zM8 0L4.500 2.500 8 5z" /></Svg>
        <Svg w={8} h={5}><path d="M0 0l3.500 2.500L0 5zM4 0l3.500 2.500L4 5z" /></Svg>
      </div>
      <div className="flex min-h-0 flex-1">
        <nav className="w-[38px] shrink-0 border-r border-[#2a2a2a]">
          {DOCK.map((d) => (
            <div key={d.name} className="flex h-[41px] flex-col items-center border-t border-b border-t-[#656565] border-b-[#2a2a2a] pt-[3px]">
              <Grip />
              <IconButton label={d.name} className="flex-1">{d.icon}</IconButton>
            </div>
          ))}
        </nav>
        <div className="ml-px flex min-w-0 flex-1 flex-col border-l border-[#2a2a2a]">
          <CharacterPanel />
          <StylesPanel />
          <LayersPanel />
        </div>
      </div>
    </aside>
  )
}

function TitleBar() {
  return (
    <header className="flex h-[31px] shrink-0 border-t border-[#707070]">
      <span className="w-[47px] pl-[6px] font-[Open_Sans,sans-serif] text-[21px] leading-[26px] font-bold text-[#7ba7d6]">Ps</span>
      <nav className="flex items-center gap-[15px] text-[13px]">
        {MENUS.map(([name, key]) => (
          <button key={key} type="button" className="whitespace-nowrap">{name}(<u>{key}</u>)</button>
        ))}
      </nav>
      <div className="mr-[2px] ml-auto flex h-[19px] rounded-b-[3px] border border-t-0 border-[#333] bg-linear-to-b from-[#606060] to-[#505050] text-[#e8e8e8]">
        <button type="button" aria-label="最小化" className="flex w-[27px] items-center justify-center border-r border-[#333]">
          <Svg w={10} h={10}><path d="M0 6h10v3H0z" /></Svg>
        </button>
        <button type="button" aria-label="最大化" className="flex w-[27px] items-center justify-center border-r border-[#333]">
          <Svg w={10} h={8}><path d="M1 1h8v6H1z" fill="none" stroke="currentColor" strokeWidth={2} /></Svg>
        </button>
        <button type="button" aria-label="关闭" className="flex w-[47px] items-center justify-center">
          <Svg w={11} h={9}><path d="M1 .500l9 8M10 .500l-9 8" stroke="currentColor" strokeWidth={2.500} /></Svg>
        </button>
      </div>
    </header>
  )
}

export default function App() {
  return (
    <div className="flex h-screen flex-col overflow-hidden rounded-t-[5px] border border-[#333] bg-[#535353] px-[3px] pb-[3px] font-[Open_Sans,Noto_Sans_CJK_SC,sans-serif] text-white">
      <TitleBar />
      <div className="flex min-h-0 flex-1 flex-col border border-[#2a2a2a]">
        <OptionsBar />
        <div className="flex min-h-0 flex-1">
          <Toolbar />
          <DocumentArea />
          <RightSide />
        </div>
      </div>
    </div>
  )
}
